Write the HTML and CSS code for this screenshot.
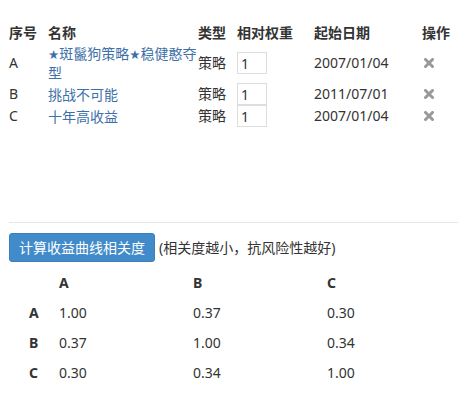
FILE: index.html
```html
<!DOCTYPE html>
<html lang="zh">
<head>
<meta charset="utf-8">
<link rel="stylesheet" href="styles.css">
</head>
<body>
<div class="page">
  <table class="strategies">
    <colgroup>
      <col class="c-no"><col class="c-name"><col class="c-type"><col class="c-weight"><col class="c-date"><col class="c-op">
    </colgroup>
    <thead>
      <tr><th>序号</th><th>名称</th><th>类型</th><th>相对权重</th><th>起始日期</th><th>操作</th></tr>
    </thead>
    <tbody>
      <tr class="tall">
        <td>A</td>
        <td class="name"><a href="#"><span class="star">★</span>斑鬣狗策略<span class="star">★</span>稳健憨夺型</a></td>
        <td>策略</td>
        <td><input class="weight" type="text" value="1"></td>
        <td>2007/01/04</td>
        <td><svg class="del" width="10" height="10" viewBox="0 0 10 10"><path d="M1.5 1.5L8.5 8.5M8.5 1.5L1.5 8.5" stroke="#999" stroke-width="3" stroke-linecap="square"/></svg></td>
      </tr>
      <tr>
        <td>B</td>
        <td class="name"><a href="#">挑战不可能</a></td>
        <td>策略</td>
        <td><input class="weight" type="text" value="1"></td>
        <td>2011/07/01</td>
        <td><svg class="del" width="10" height="10" viewBox="0 0 10 10"><path d="M1.5 1.5L8.5 8.5M8.5 1.5L1.5 8.5" stroke="#999" stroke-width="3" stroke-linecap="square"/></svg></td>
      </tr>
      <tr>
        <td>C</td>
        <td class="name"><a href="#">十年高收益</a></td>
        <td>策略</td>
        <td><input class="weight" type="text" value="1"></td>
        <td>2007/01/04</td>
        <td><svg class="del" width="10" height="10" viewBox="0 0 10 10"><path d="M1.5 1.5L8.5 8.5M8.5 1.5L1.5 8.5" stroke="#999" stroke-width="3" stroke-linecap="square"/></svg></td>
      </tr>
    </tbody>
  </table>

  <hr class="divider">

  <div class="actions">
    <button class="btn-primary" type="button">计算收益曲线相关度</button>
    <span class="hint">(相关度越小，抗风险性越好)</span>
  </div>

  <div class="corr">
    <div class="corr-row head"><span></span><span>A</span><span>B</span><span>C</span></div>
    <div class="corr-row"><span class="lbl">A</span><span>1.00</span><span>0.37</span><span>0.30</span></div>
    <div class="corr-row"><span class="lbl">B</span><span>0.37</span><span>1.00</span><span>0.34</span></div>
    <div class="corr-row"><span class="lbl">C</span><span>0.30</span><span>0.34</span><span>1.00</span></div>
  </div>
</div>
</body>
</html>
```
FILE: styles.css
```css
html, body {
  margin: 0;
  padding: 0;
  background: #fff;
}
body {
  font-family: "Noto Sans", "Noto Sans CJK SC", sans-serif;
  font-size: 14px;
  line-height: 20px;
  color: #333;
}
.page {
  padding: 23px 9px 0 9px;
}
.strategies {
  border-collapse: collapse;
  border-spacing: 0;
  table-layout: fixed;
  width: 449px;
}
.c-no { width: 39px; }
.c-name { width: 150px; }
.c-type { width: 39px; }
.c-weight { width: 77px; }
.c-date { width: 108px; }
.c-op { width: 36px; }
.strategies th {
  text-align: left;
  font-weight: bold;
  padding: 0;
  height: 20px;
  line-height: 20px;
  white-space: nowrap;
}
.strategies td {
  padding: 0;
  vertical-align: middle;
  height: 22px;
  line-height: 20px;
}
.strategies tr.tall td {
  height: 40px;
}
.strategies td.name {
  line-height: 19px;
}
.name a {
  color: #3d70a8;
  text-decoration: none;
}
.star {
  font-family: "DejaVu Sans", sans-serif;
  font-size: 12.5px;
  line-height: 1;
}
.weight {
  box-sizing: border-box;
  width: 30px;
  height: 22px;
  margin: 0;
  padding: 0 3px;
  border: 1px solid #ddd;
  font-family: "Noto Sans", sans-serif;
  font-size: 14px;
  color: #333;
  display: block;
  outline: none;
}
.del {
  display: block;
  margin-left: 2px;
}
.divider {
  border: 0;
  border-top: 1px solid #e6e6e6;
  margin: 95px 0 0 0;
  height: 0;
}
.actions {
  margin-top: 10px;
  display: flex;
  align-items: center;
  gap: 4px;
}
.btn-primary {
  background: #428bca;
  border: 1px solid #3a7fbc;
  border-radius: 3px;
  color: #fff;
  font-family: "Noto Sans", "Noto Sans CJK SC", sans-serif;
  font-size: 14px;
  line-height: 19px;
  padding: 4px 9px;
  margin: 0;
  cursor: pointer;
}
.hint {
  color: #333;
}
.corr {
  margin-top: 6px;
  padding-left: 20px;
}
.corr-row {
  display: grid;
  grid-template-columns: 30px 134px 134px 1fr;
  height: 30px;
  align-items: center;
}
.corr-row.head span,
.corr-row .lbl {
  font-weight: bold;
}
```
